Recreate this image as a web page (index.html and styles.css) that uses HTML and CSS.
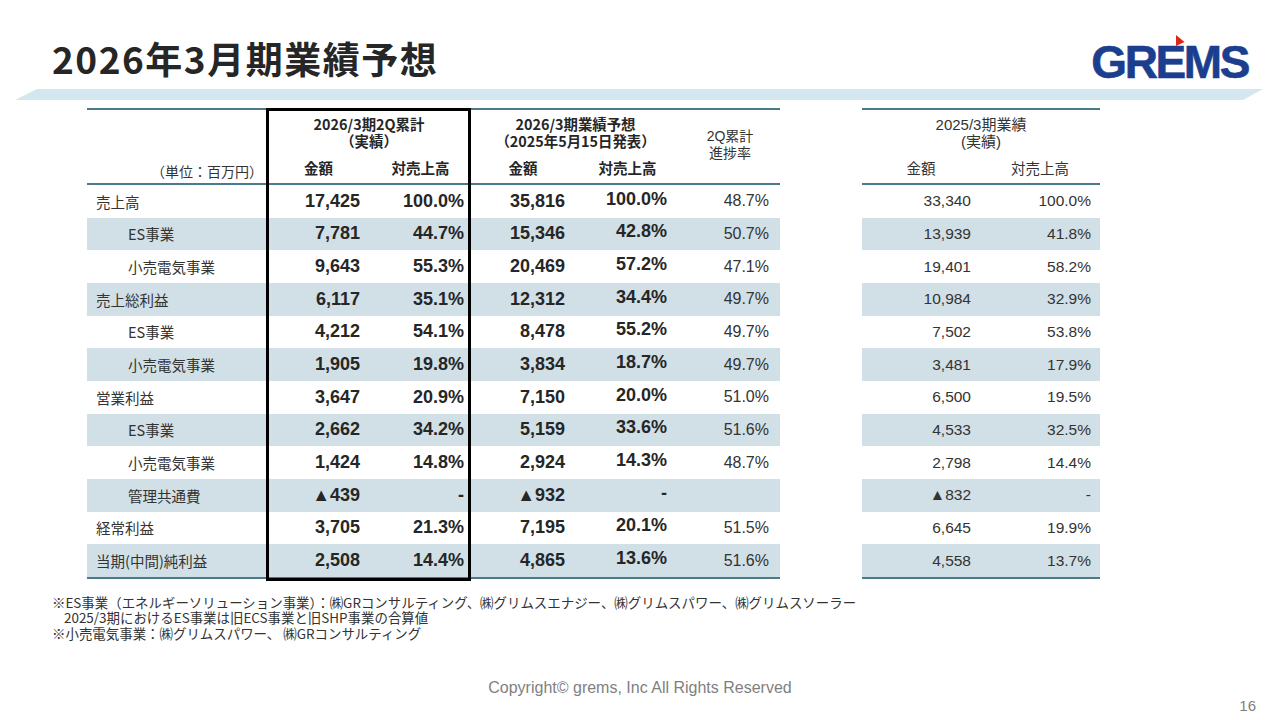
FILE: index.html
```html
<!DOCTYPE html>
<html lang="ja">
<head>
<meta charset="utf-8">
<title>2026年3月期業績予想</title>
<link rel="stylesheet" href="styles.css">
</head>
<body>
<div class="page">
  <header class="header">
    <h1 class="title">2026年3月期業績予想</h1>
    <div class="logo">
      <span class="logo-text">GREMS</span>
      <svg class="logo-flag" viewBox="0 0 10 12" width="10" height="12"><polygon points="1,0 9.5,7 1,11" fill="#e2231a"/></svg>
    </div>
  </header>
  <div class="band"></div>

  <main class="tables">
    <div class="main-wrap">
      <div class="grid grid-main">
        <div class="c h-unit hb">（単位：百万円）</div>
        <div class="c h-grp span2"><span class="ln">2026/3期2Q累計</span><span class="ln">（実績）</span></div>
        <div class="c h-grp span2"><span class="ln">2026/3期業績予想</span><span class="ln">（2025年5月15日発表）</span></div>
        <div class="c h-rate hb"><span class="ln">2Q累計</span><span class="ln">進捗率</span></div>
        <div class="c h-sub hb">金額</div>
        <div class="c h-sub hb">対売上高</div>
        <div class="c h-sub hb">金額</div>
        <div class="c h-sub hb">対売上高</div>

        <div class="row"><div class="c lbl">売上高</div><div class="c n">17,425</div><div class="c n">100.0%</div><div class="c n">35,816</div><div class="c n up">100.0%</div><div class="c r">48.7%</div></div>
        <div class="row sh"><div class="c lbl ind">ES事業</div><div class="c n">7,781</div><div class="c n">44.7%</div><div class="c n">15,346</div><div class="c n up">42.8%</div><div class="c r">50.7%</div></div>
        <div class="row"><div class="c lbl ind">小売電気事業</div><div class="c n">9,643</div><div class="c n">55.3%</div><div class="c n">20,469</div><div class="c n up">57.2%</div><div class="c r">47.1%</div></div>
        <div class="row sh"><div class="c lbl">売上総利益</div><div class="c n">6,117</div><div class="c n">35.1%</div><div class="c n">12,312</div><div class="c n up">34.4%</div><div class="c r">49.7%</div></div>
        <div class="row"><div class="c lbl ind">ES事業</div><div class="c n">4,212</div><div class="c n">54.1%</div><div class="c n">8,478</div><div class="c n up">55.2%</div><div class="c r">49.7%</div></div>
        <div class="row sh"><div class="c lbl ind">小売電気事業</div><div class="c n">1,905</div><div class="c n">19.8%</div><div class="c n">3,834</div><div class="c n up">18.7%</div><div class="c r">49.7%</div></div>
        <div class="row"><div class="c lbl">営業利益</div><div class="c n">3,647</div><div class="c n">20.9%</div><div class="c n">7,150</div><div class="c n up">20.0%</div><div class="c r">51.0%</div></div>
        <div class="row sh"><div class="c lbl ind">ES事業</div><div class="c n">2,662</div><div class="c n">34.2%</div><div class="c n">5,159</div><div class="c n up">33.6%</div><div class="c r">51.6%</div></div>
        <div class="row"><div class="c lbl ind">小売電気事業</div><div class="c n">1,424</div><div class="c n">14.8%</div><div class="c n">2,924</div><div class="c n up">14.3%</div><div class="c r">48.7%</div></div>
        <div class="row sh"><div class="c lbl ind">管理共通費</div><div class="c n">▲439</div><div class="c n">-</div><div class="c n">▲932</div><div class="c n up">-</div><div class="c r"></div></div>
        <div class="row"><div class="c lbl">経常利益</div><div class="c n">3,705</div><div class="c n">21.3%</div><div class="c n">7,195</div><div class="c n up">20.1%</div><div class="c r">51.5%</div></div>
        <div class="row sh"><div class="c lbl">当期(中間)純利益</div><div class="c n">2,508</div><div class="c n">14.4%</div><div class="c n">4,865</div><div class="c n up">13.6%</div><div class="c r">51.6%</div></div>
      </div>
      <div class="box"></div>
    </div>

    <div class="grid grid-prev">
      <div class="c h-grp-prev span2"><span class="ln">2025/3期業績</span><span class="ln">(実績)</span></div>
      <div class="c h-sub-prev hb">金額</div>
      <div class="c h-sub-prev hb">対売上高</div>

      <div class="row"><div class="c r">33,340</div><div class="c r">100.0%</div></div>
      <div class="row sh"><div class="c r">13,939</div><div class="c r">41.8%</div></div>
      <div class="row"><div class="c r">19,401</div><div class="c r">58.2%</div></div>
      <div class="row sh"><div class="c r">10,984</div><div class="c r">32.9%</div></div>
      <div class="row"><div class="c r">7,502</div><div class="c r">53.8%</div></div>
      <div class="row sh"><div class="c r">3,481</div><div class="c r">17.9%</div></div>
      <div class="row"><div class="c r">6,500</div><div class="c r">19.5%</div></div>
      <div class="row sh"><div class="c r">4,533</div><div class="c r">32.5%</div></div>
      <div class="row"><div class="c r">2,798</div><div class="c r">14.4%</div></div>
      <div class="row sh"><div class="c r">▲832</div><div class="c r">-</div></div>
      <div class="row"><div class="c r">6,645</div><div class="c r">19.9%</div></div>
      <div class="row sh"><div class="c r">4,558</div><div class="c r">13.7%</div></div>
    </div>
  </main>

  <div class="notes">
    <p>※ES事業（エネルギーソリューション事業）：㈱GRコンサルティング、㈱グリムスエナジー、㈱グリムスパワー、㈱グリムスソーラー</p>
    <p class="indent">2025/3期におけるES事業は旧ECS事業と旧SHP事業の合算値</p>
    <p>※小売電気事業：㈱グリムスパワー、 ㈱GRコンサルティング</p>
  </div>

  <footer class="footer">
    <div class="copyright">Copyright© grems, Inc All Rights Reserved</div>
    <div class="pagenum">16</div>
  </footer>
</div>
</body>
</html>
```

FILE: styles.css
```css
* { box-sizing: border-box; }
html, body { margin: 0; padding: 0; }
body {
  width: 1280px;
  height: 720px;
  background: #fff;
  font-family: "Noto Sans CJK JP", "Liberation Sans", sans-serif;
  color: #333;
  overflow: hidden;
}
.page {
  width: 1280px;
  height: 720px;
  display: flex;
  flex-direction: column;
}
.header {
  height: 89px;
  padding: 36px 32px 0 52px;
  display: flex;
  justify-content: space-between;
  align-items: flex-start;
}
.title {
  margin: 0;
  font-family: "Noto Sans CJK JP", sans-serif;
  font-weight: 700;
  font-size: 37px;
  line-height: 44px;
  letter-spacing: 1.5px;
  color: #262626;
}
.logo {
  position: relative;
  margin-top: 3px;
}
.logo-text {
  display: block;
  font-family: "Liberation Sans", sans-serif;
  font-weight: 700;
  font-size: 46px;
  line-height: 46px;
  letter-spacing: -2.4px;
  color: #1b3f8e;
  -webkit-text-stroke: 0.6px #1b3f8e;
}
.logo-flag {
  position: absolute;
  left: 84px;
  top: -4px;
}
.band {
  margin-left: 15px;
  width: 1248px;
  height: 11px;
  background: #d4e7ee;
  clip-path: polygon(22px 0, 100% 0, calc(100% - 20px) 100%, 0 100%);
}
.tables {
  margin-top: 8px;
  padding-left: 87px;
  display: flex;
  gap: 82px;
  align-items: flex-start;
}
.main-wrap { position: relative; }
.grid {
  display: grid;
  grid-template-rows: 42px 33px repeat(12, 32.67px);
  border-top: 2px solid #4b7a8f;
  border-bottom: 2px solid #4b7a8f;
}
.grid-main { grid-template-columns: 180px 103px 101px 104px 105px 100px; }
.grid-prev { grid-template-columns: 118px 120px; }
.row { display: contents; }
.c {
  display: flex;
  align-items: center;
  white-space: nowrap;
}
.ln {
  display: block;
  height: 17px;
  line-height: 17px;
}
.hb { border-bottom: 2px solid #4b7a8f; }
.span2 { grid-column: span 2; }
.h-unit {
  grid-row: span 2;
  align-items: flex-end;
  justify-content: flex-end;
  padding: 0 4px 3px 0;
  font-size: 14px;
  line-height: 17px;
  color: #333;
}
.h-grp {
  flex-direction: column;
  align-items: center;
  justify-content: flex-start;
  text-align: center;
  padding-top: 5px;
  font-weight: 700;
  font-size: 14.4px;
  color: #262626;
}
.h-rate {
  grid-row: span 2;
  flex-direction: column;
  justify-content: center;
  align-items: center;
  text-align: center;
  font-family: "Liberation Sans", "Noto Sans CJK JP", sans-serif;
  font-size: 14px;
  padding-bottom: 4px;
  color: #333;
}
.h-sub {
  justify-content: center;
  font-weight: 700;
  font-size: 14.5px;
  color: #262626;
}
.h-grp-prev {
  flex-direction: column;
  align-items: center;
  justify-content: flex-start;
  text-align: center;
  padding-top: 6px;
  font-family: "Liberation Sans", "Noto Sans CJK JP", sans-serif;
  font-size: 15px;
  color: #333;
}
.h-sub-prev {
  justify-content: center;
  font-size: 14.5px;
  color: #333;
}
.lbl {
  padding-left: 9px;
  font-size: 14.5px;
  color: #333;
}
.lbl.ind { padding-left: 41px; }
.n {
  justify-content: flex-end;
  font-family: "Liberation Sans", "DejaVu Sans", sans-serif;
  font-weight: 700;
  font-size: 18px;
  color: #262626;
  padding-right: 10px;
}
.grid-main .n:nth-child(3) { padding-right: 7px; }
.grid-main .n.up { padding-right: 13px; padding-bottom: 4px; }
.r {
  justify-content: flex-end;
  font-family: "Liberation Sans", "DejaVu Sans", sans-serif;
  font-size: 15.5px;
  color: #333;
  padding-right: 10px;
}
.grid-main .r { font-size: 16px; padding-right: 11px; }
.grid-prev .r { padding-right: 9px; }
.sh > .c { background: #d1dfe6; }
.box {
  position: absolute;
  left: 179px;
  top: 0;
  width: 205px;
  height: 473px;
  border: 3px solid #000;
  pointer-events: none;
}
.notes {
  margin-top: 16px;
  padding-left: 52px;
  font-size: 13.45px;
  line-height: 15.5px;
  color: #333;
}
.notes p { margin: 0; white-space: nowrap; }
.notes .indent { padding-left: 12px; }
.footer {
  margin-top: auto;
  padding: 0 24px 5px 0;
  font-family: "Liberation Sans", sans-serif;
  color: #7f7f7f;
}
.copyright {
  text-align: center;
  padding-left: 24px;
  font-size: 16px;
  line-height: 18px;
}
.pagenum {
  text-align: right;
  font-size: 15px;
  line-height: 18px;
}
```
